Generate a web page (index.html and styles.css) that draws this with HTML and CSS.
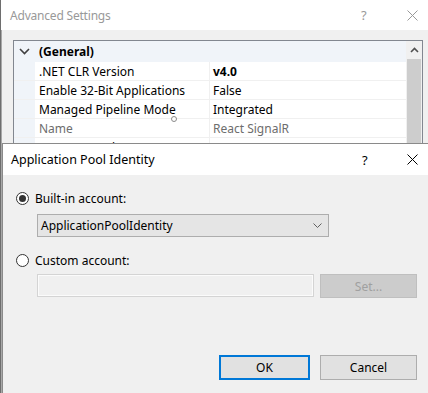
FILE: index.html
```html
<!DOCTYPE html>
<html>
<head>
<meta charset="utf-8">
<link rel="stylesheet" href="styles.css">
</head>
<body>
<div class="desk">
  <div class="win">
    <div class="titlebar inactive">
      <span class="title">Advanced Settings</span>
      <span class="help">?</span>
      <svg class="close" width="11" height="11" viewBox="0 0 11 11"><path d="M0.5 0.5L10.5 10.5M10.5 0.5L0.5 10.5" stroke="currentColor" stroke-width="1" fill="none"/></svg>
    </div>
    <div class="winbody">
      <div class="grid">
        <div class="rows">
          <div class="cat">
            <span class="gutter"><svg width="11" height="7" viewBox="0 0 11 7"><path d="M1 1L5.5 5.5L10 1" stroke="#404040" stroke-width="1.6" fill="none"/></svg></span>
            <span class="catname">(General)</span>
          </div>
          <div class="row"><span class="gutter"></span><span class="name">.NET CLR Version</span><span class="val bold">v4.0</span></div>
          <div class="row"><span class="gutter"></span><span class="name">Enable 32-Bit Applications</span><span class="val">False</span></div>
          <div class="row"><span class="gutter"></span><span class="name">Managed Pipeline Mode</span><span class="val">Integrated</span></div>
          <div class="row ro"><span class="gutter"></span><span class="name">Name</span><span class="val">React SignalR</span></div>
          <div class="row"><span class="gutter"></span><span class="name">Queue Length</span><span class="val">1000</span></div>
        </div>
        <div class="scroll">
          <div class="sarrow"><svg width="9" height="6" viewBox="0 0 9 6"><path d="M1 5L4.5 1.5L8 5" stroke="#505050" stroke-width="1.6" fill="none"/></svg></div>
          <div class="thumb"></div>
        </div>
      </div>
    </div>
  </div>
  <span class="cursor"></span>

  <div class="dlg">
    <div class="titlebar">
      <span class="title">Application Pool Identity</span>
      <span class="help">?</span>
      <svg class="close" width="11" height="11" viewBox="0 0 11 11"><path d="M0.5 0.5L10.5 10.5M10.5 0.5L0.5 10.5" stroke="currentColor" stroke-width="1" fill="none"/></svg>
    </div>
    <div class="dlgbody">
      <label class="radio"><span class="dot checked"></span>Built-in account:</label>
      <div class="combo">
        <span>ApplicationPoolIdentity</span>
        <svg width="9" height="5" viewBox="0 0 9 5"><path d="M0.5 0.5L4.5 4.5L8.5 0.5" stroke="#606060" stroke-width="1" fill="none"/></svg>
      </div>
      <label class="radio r2"><span class="dot"></span>Custom account:</label>
      <div class="custom">
        <div class="textbox"></div>
        <div class="btn disabled">Set...</div>
      </div>
      <div class="footer">
        <div class="btn ok">OK</div>
        <div class="btn cancel">Cancel</div>
      </div>
    </div>
  </div>
</div>
</body>
</html>
```
FILE: styles.css
```css
* { box-sizing: border-box; }
html, body { margin: 0; padding: 0; }
body {
  width: 428px;
  height: 393px;
  overflow: hidden;
  font-family: "Noto Sans", "Segoe UI", sans-serif;
  font-size: 12px;
  color: #000;
  background: #f0f0f0;
}
.desk {
  position: relative;
  width: 428px;
  height: 393px;
  border-left: 1px solid #6e6e6e;
  box-shadow: inset 1px 0 0 #a8a8a8;
}
.win { height: 100%; }
.titlebar {
  height: 30px;
  background: #fff;
  display: flex;
  align-items: center;
  padding-left: 9px;
}
.titlebar .title { flex: 1; font-size: 12px; }
.titlebar.inactive { color: #999; }
.titlebar.inactive .title { letter-spacing: -0.2px; }
.titlebar .help { font-size: 13px; width: 12px; margin-right: 34px; }
.titlebar .close { margin-right: 10px; }
.winbody { padding: 10px 0 0 12px; }
.grid {
  width: 410px;
  height: 103px;
  overflow: hidden;
  border: 1px solid #828790;
  border-bottom: none;
  background: #fff;
  display: flex;
}
.rows { width: 392px; flex: none; }
.gutter {
  width: 21px;
  flex: none;
  align-self: stretch;
  background: #f0f4f9;
  display: flex;
  align-items: center;
  justify-content: center;
}
.cat {
  height: 21px;
  display: flex;
  align-items: center;
  background: #f0f4f9;
}
.catname { font-weight: bold; padding-left: 4px; }
.row {
  height: 19px;
  display: flex;
  align-items: center;
  border-bottom: 1px solid #f0f0f0;
}
.row .name {
  width: 175px;
  padding-left: 4px;
  align-self: stretch;
  display: flex;
  align-items: center;
  border-right: 1px solid #f0f0f0;
}
.row .val { padding-left: 3px; }
.bold { font-weight: bold; }
.row.ro { color: #6d6d6d; }
.scroll {
  width: 16px;
  flex: none;
  background: #f0f0f0;
  display: flex;
  flex-direction: column;
  align-items: center;
}
.sarrow {
  height: 18px;
  width: 16px;
  flex: none;
  display: flex;
  align-items: center;
  justify-content: center;
}
.thumb {
  width: 14px;
  flex: 1;
  background: #cdcdcd;
}
.cursor {
  position: absolute;
  left: 170px;
  top: 116px;
  width: 6px;
  height: 6px;
  border: 1px solid #8a8a8a;
  border-radius: 50%;
  background: #fff;
}

.dlg {
  position: absolute;
  left: 1px;
  top: 143px;
  width: 430px;
  height: 260px;
  border-top: 1px solid #8a8a8a;
  border-left: 1px solid #8a8a8a;
  background: #f0f0f0;
}
.dlg .titlebar { height: 31px; padding-left: 8px; }
.dlg .titlebar .title { font-size: 12.5px; }
.dlg .titlebar .help { margin-right: 33px; }
.dlg .titlebar .close { margin-right: 14px; }
.dlgbody {
  padding: 15px 10px 0 13px;
  display: flex;
  flex-direction: column;
}
.radio {
  height: 16px;
  display: flex;
  align-items: center;
}
.dot {
  width: 13px;
  height: 13px;
  border: 1px solid #333;
  border-radius: 50%;
  background: #fff;
  margin-right: 6px;
  position: relative;
}
.dot.checked::after {
  content: "";
  position: absolute;
  left: 2px;
  top: 2px;
  width: 7px;
  height: 7px;
  border-radius: 50%;
  background: #333;
}
.combo {
  margin: 8px 0 0 21px;
  width: 292px;
  height: 23px;
  border: 1px solid #adadad;
  background: #e5e5e5;
  display: flex;
  align-items: center;
  justify-content: space-between;
  padding: 0 6px 0 3px;
}
.radio.r2 { margin-top: 15px; }
.custom {
  margin: 6px 0 0 21px;
  display: flex;
  align-items: flex-start;
  gap: 6px;
}
.textbox {
  width: 277px;
  height: 23px;
  border: 1px solid #d4d4d4;
  box-shadow: inset 0 0 0 1px #fbfbfb;
  background: #f0f0f0;
}
.btn {
  height: 24px;
  display: flex;
  align-items: center;
  justify-content: center;
  background: #e1e1e1;
  border: 1px solid #adadad;
}
.btn.disabled {
  width: 97px;
  background: #cccccc;
  border-color: #bfbfbf;
  color: #a0a0a0;
}
.footer {
  margin-top: 57px;
  margin-left: 203px;
  display: flex;
  gap: 10px;
}
.btn.ok {
  width: 91px;
  height: 25px;
  border: 2px solid #0078d7;
}
.btn.cancel {
  width: 97px;
  height: 25px;
}
```
